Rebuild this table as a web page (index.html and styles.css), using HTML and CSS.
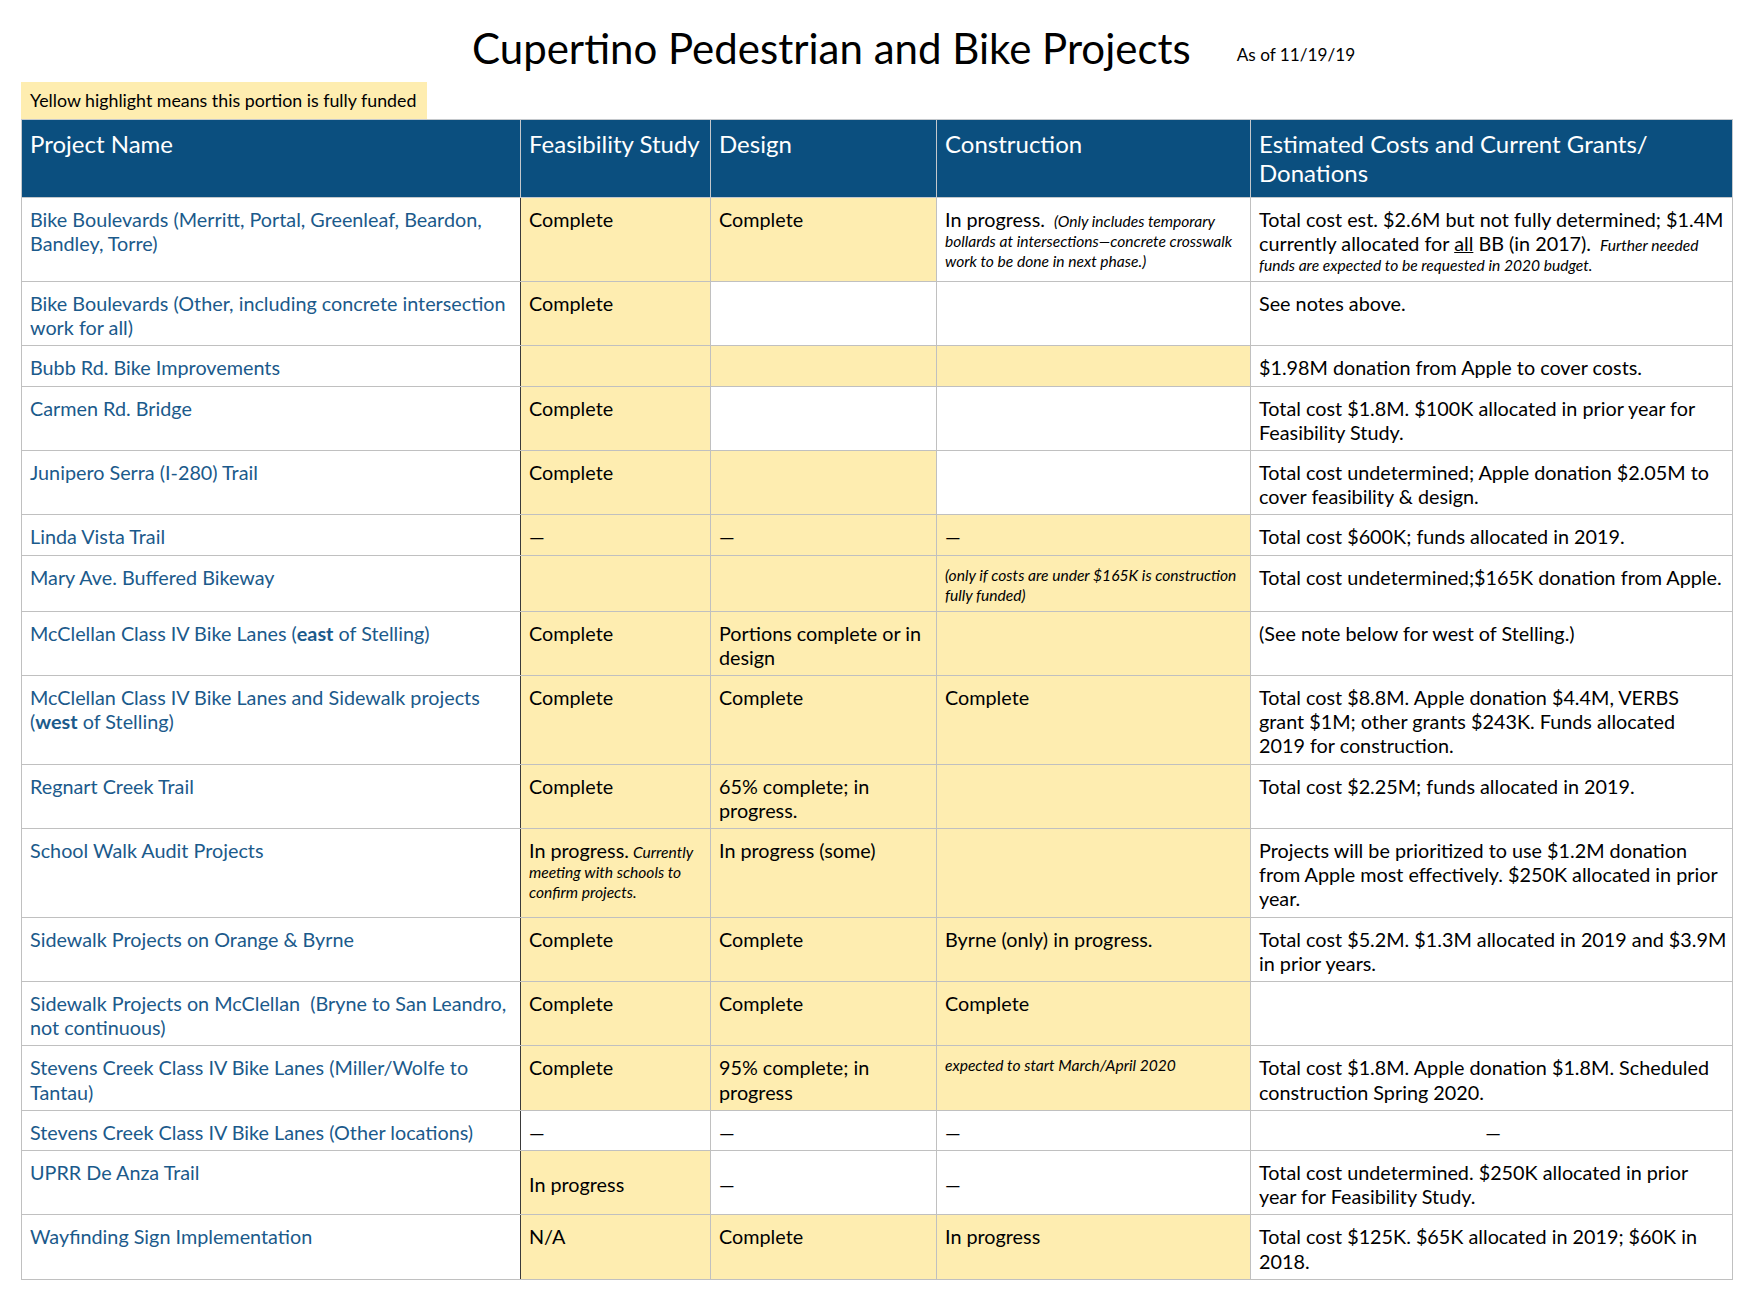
FILE: index.html
```html
<!DOCTYPE html>
<html lang="en">
<head>
<meta charset="utf-8">
<title>Cupertino Pedestrian and Bike Projects</title>
<link rel="stylesheet" href="styles.css">
</head>
<body>
<div class="page">
  <div class="title-row">
    <h1 class="title">Cupertino Pedestrian and Bike Projects</h1>
    <div class="asof">As of 11/19/19</div>
  </div>
  <div class="legend">Yellow highlight means this portion is fully funded</div>
  <table class="projects">
    <colgroup>
      <col class="c-name"><col class="c-feas"><col class="c-design"><col class="c-cons"><col class="c-est">
    </colgroup>
    <thead>
      <tr>
        <th>Project Name</th>
        <th>Feasibility Study</th>
        <th>Design</th>
        <th>Construction</th>
        <th>Estimated Costs and Current Grants/ Donations</th>
      </tr>
    </thead>
    <tbody>
      <tr>
        <td class="name">Bike Boulevards (Merritt, Portal, Greenleaf, Beardon, Bandley, Torre)</td>
        <td class="y">Complete</td>
        <td class="y">Complete</td>
        <td class="mix"><span class="n">In progress.&nbsp;</span> <i>(Only includes temporary bollards at intersections—concrete crosswalk work to be done in next phase.)</i></td>
        <td class="mix"><span class="n">Total cost est. $2.6M but not fully determined; $1.4M currently allocated for <u>all</u> BB (in 2017).&nbsp;</span> <i>Further needed funds are expected to be requested in 2020 budget.</i></td>
      </tr>
      <tr>
        <td class="name">Bike Boulevards (Other, including concrete intersection work for all)</td>
        <td class="y">Complete</td>
        <td></td>
        <td></td>
        <td>See notes above.</td>
      </tr>
      <tr>
        <td class="name">Bubb Rd. Bike Improvements</td>
        <td class="y"></td>
        <td class="y"></td>
        <td class="y"></td>
        <td>$1.98M donation from Apple to cover costs.</td>
      </tr>
      <tr>
        <td class="name">Carmen Rd. Bridge</td>
        <td class="y">Complete</td>
        <td></td>
        <td></td>
        <td>Total cost $1.8M. $100K allocated in prior year for Feasibility Study.</td>
      </tr>
      <tr>
        <td class="name">Junipero Serra (I-280) Trail</td>
        <td class="y">Complete</td>
        <td class="y"></td>
        <td></td>
        <td>Total cost undetermined; Apple donation $2.05M to cover feasibility &amp; design.</td>
      </tr>
      <tr>
        <td class="name">Linda Vista Trail</td>
        <td class="y">—</td>
        <td class="y">—</td>
        <td class="y">—</td>
        <td>Total cost $600K; funds allocated in 2019.</td>
      </tr>
      <tr>
        <td class="name">Mary Ave. Buffered Bikeway</td>
        <td class="y"></td>
        <td class="y"></td>
        <td class="y sm"><i>(only if costs are under $165K is construction fully funded)</i></td>
        <td>Total cost undetermined;$165K donation from Apple.</td>
      </tr>
      <tr>
        <td class="name">McClellan Class IV Bike Lanes (<b>east</b> of Stelling)</td>
        <td class="y">Complete</td>
        <td class="y">Portions complete or in design</td>
        <td class="y"></td>
        <td>(See note below for west of Stelling.)</td>
      </tr>
      <tr>
        <td class="name">McClellan Class IV Bike Lanes and Sidewalk projects (<b>west</b> of Stelling)</td>
        <td class="y">Complete</td>
        <td class="y">Complete</td>
        <td class="y">Complete</td>
        <td>Total cost $8.8M. Apple donation $4.4M, VERBS<br>grant $1M; other grants $243K. Funds allocated<br>2019 for construction.</td>
      </tr>
      <tr>
        <td class="name">Regnart Creek Trail</td>
        <td class="y">Complete</td>
        <td class="y">65% complete; in progress.</td>
        <td class="y"></td>
        <td>Total cost $2.25M; funds allocated in 2019.</td>
      </tr>
      <tr>
        <td class="name">School Walk Audit Projects</td>
        <td class="y mix"><span class="n">In progress.</span> <i>Currently meeting with schools to confirm projects.</i></td>
        <td class="y">In progress (some)</td>
        <td class="y"></td>
        <td>Projects will be prioritized to use $1.2M donation from Apple most effectively. $250K allocated in prior year.</td>
      </tr>
      <tr>
        <td class="name">Sidewalk Projects on Orange &amp; Byrne</td>
        <td class="y">Complete</td>
        <td class="y">Complete</td>
        <td class="y">Byrne (only) in progress.</td>
        <td>Total cost $5.2M. $1.3M allocated in 2019 and $3.9M in prior years.</td>
      </tr>
      <tr>
        <td class="name">Sidewalk Projects on McClellan &nbsp;(Bryne to San Leandro, not continuous)</td>
        <td class="y">Complete</td>
        <td class="y">Complete</td>
        <td class="y">Complete</td>
        <td></td>
      </tr>
      <tr>
        <td class="name">Stevens Creek Class IV Bike Lanes (Miller/Wolfe to Tantau)</td>
        <td class="y">Complete</td>
        <td class="y">95% complete; in progress</td>
        <td class="y sm"><i>expected to start March/April 2020</i></td>
        <td>Total cost $1.8M. Apple donation $1.8M. Scheduled construction Spring 2020.</td>
      </tr>
      <tr>
        <td class="name">Stevens Creek Class IV Bike Lanes (Other locations)</td>
        <td>—</td>
        <td>—</td>
        <td>—</td>
        <td class="center">—</td>
      </tr>
      <tr>
        <td class="name">UPRR De Anza Trail</td>
        <td class="y drop">In progress</td>
        <td class="drop">—</td>
        <td class="drop">—</td>
        <td>Total cost undetermined. $250K allocated in prior<br>year for Feasibility Study.</td>
      </tr>
      <tr>
        <td class="name">Wayfinding Sign Implementation</td>
        <td class="y">N/A</td>
        <td class="y">Complete</td>
        <td class="y">In progress</td>
        <td>Total cost $125K. $65K allocated in 2019; $60K in 2018.</td>
      </tr>
    </tbody>
  </table>
</div>
</body>
</html>
```
FILE: styles.css
```css
html, body {
  margin: 0;
  padding: 0;
  background: #ffffff;
}

body {
  font-family: Lato, "Open Sans", "Liberation Sans", sans-serif;
  color: #000000;
}

.page {
  padding: 0 0 40px 21px;
}

.title-row {
  display: flex;
  align-items: flex-start;
  padding-left: 451px;
  padding-top: 24px;
}

.title {
  margin: 0;
  font-size: 42px;
  line-height: 48px;
  font-weight: 400;
}

.asof {
  margin-left: 46px;
  margin-top: 20px;
  font-size: 17.2px;
  line-height: 22px;
}

.legend {
  display: inline-block;
  margin-top: 10px;
  background: #feedb0;
  font-size: 17.8px;
  line-height: 21.6px;
  padding: 8px 11px 7px 9px;
}

.projects {
  border-collapse: collapse;
  table-layout: fixed;
  width: 1711px;
}

.c-name { width: 499px; }
.c-feas { width: 190px; }
.c-design { width: 226px; }
.c-cons { width: 314px; }
.c-est { width: 482px; }

.projects th {
  background: #0b4f7f;
  color: #ffffff;
  font-weight: 400;
  font-size: 24px;
  line-height: 29px;
  text-align: left;
  vertical-align: top;
  padding: 9px 5px 10px 8px;
  border: 1px solid #c4c8cc;
}

.projects td {
  font-size: 19.8px;
  line-height: 24.2px;
  vertical-align: top;
  padding: 9px 5px 6px 8px;
  border: 1px solid #c0c0c0;
}

.projects td.name {
  color: #1b5a8b;
  border-right: 1px solid #3a3a3a;
}

.projects td.y {
  background: #feedb0;
}

.projects td.mix,
.projects td.sm {
  font-size: 15.6px;
  line-height: 20px;
}

.projects td .n {
  font-size: 19.8px;
  line-height: 24.2px;
}

.projects td.center {
  text-align: center;
}

.projects td.drop {
  padding-top: 21px;
}
```
